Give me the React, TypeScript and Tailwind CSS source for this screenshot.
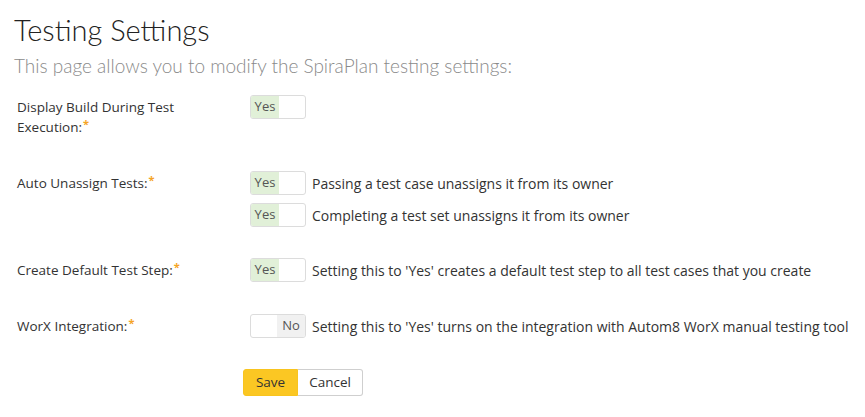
import React from 'react';

type ToggleProps = { on: boolean };

function Toggle({ on }: ToggleProps) {
  return (
    <div className="flex h-[24px] w-[56px] shrink-0 overflow-hidden rounded-[3px] border border-[#dcdcdc] bg-white text-[13px] text-[#555]">
      {on ? (
        <>
          <span className="flex w-[28px] items-center justify-center bg-[#e1f0d8]">Yes</span>
          <span className="flex-1" />
        </>
      ) : (
        <>
          <span className="flex-1" />
          <span className="flex w-[28px] items-center justify-center bg-[#f1f1f1]">No</span>
        </>
      )}
    </div>
  );
}

function Label({ children }: { children: React.ReactNode }) {
  return (
    <div className="w-[250px] shrink-0 pl-[17px] pr-4 pt-[2px] text-[13.5px] leading-5 text-[#333]">
      {children}
      <span className="relative -top-[4px] ml-[1px] text-[11px] font-bold leading-none text-[#f5a425]">*</span>
    </div>
  );
}

function Option({ on, text }: { on: boolean; text?: string }) {
  return (
    <div className="flex items-center gap-[6px]">
      <Toggle on={on} />
      {text && <span className="text-[14px] text-[#333]">{text}</span>}
    </div>
  );
}

export default function App() {
  return (
    <div className="min-h-screen bg-white font-['Open_Sans',sans-serif] text-[13px]">
      <div className="pl-[14px] pt-[12px]">
        <h1 className="font-['Lato',sans-serif] text-[29px] font-light leading-9 text-[#222]">Testing Settings</h1>
        <p className="mt-[5px] font-['Lato',sans-serif] text-[19px] font-light leading-[26px] text-[#8a8a8a]">
          This page allows you to modify the SpiraPlan testing settings:
        </p>
      </div>

      <div className="mt-[16px] flex items-start">
        <Label>
          Display Build During Test
          <br />
          Execution:
        </Label>
        <Option on={true} />
      </div>

      <div className="mt-[34px] flex items-start">
        <Label>Auto Unassign Tests:</Label>
        <div className="flex flex-col gap-[8px]">
          <Option on={true} text="Passing a test case unassigns it from its owner" />
          <Option on={true} text="Completing a test set unassigns it from its owner" />
        </div>
      </div>

      <div className="mt-[31px] flex items-start">
        <Label>Create Default Test Step:</Label>
        <Option on={true} text="Setting this to 'Yes' creates a default test step to all test cases that you create" />
      </div>

      <div className="mt-[32px] flex items-start">
        <Label>WorX Integration:</Label>
        <Option on={false} text="Setting this to 'Yes' turns on the integration with Autom8 WorX manual testing tool" />
      </div>

      <div className="mt-[31px] flex pl-[243px]">
        <button className="h-[27px] w-[55px] rounded-l-[3px] border border-[#f8c41f] bg-[#fbc723] text-[13.5px] text-[#333]">Save</button>
        <button className="h-[27px] w-[65px] rounded-r-[3px] border border-l-0 border-[#cfcfcf] bg-white text-[13.5px] text-[#333]">Cancel</button>
      </div>
    </div>
  );
}
